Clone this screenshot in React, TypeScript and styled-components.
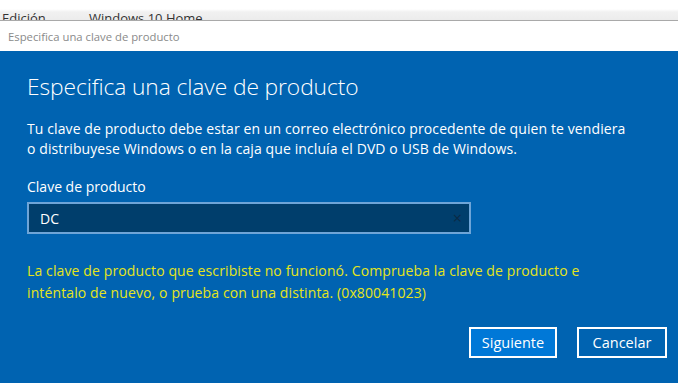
import React from "react";
import styled, { createGlobalStyle } from "styled-components";

const Global = createGlobalStyle`
  html, body { margin: 0; padding: 0; width: 678px; height: 383px; overflow: hidden; }
  body { font-family: "Open Sans", "Noto Sans", sans-serif; background: #0063b1; }
`;

const Page = styled.div`
  width: 678px;
  height: 383px;
  display: flex;
  flex-direction: column;
  overflow: hidden;
`;

const BackStrip = styled.div`
  height: 20px;
  background: linear-gradient(#ffffff 0%, #ffffff 45%, #f1f1f1 60%, #ececec 100%);
  border-bottom: 1px solid #a9a9a9;
  display: flex;
  align-items: flex-start;
  overflow: hidden;
  font-size: 13px;
  color: #333;
  padding-left: 2px;
  box-sizing: content-box;
`;

const BackCell = styled.span<{ $w?: number }>`
  display: inline-block;
  width: ${(p) => p.$w ?? 0}px;
  line-height: 1;
  margin-top: 12px;
  white-space: nowrap;
`;

const TitleBar = styled.div`
  height: 30px;
  background: #ffffff;
  display: flex;
  align-items: center;
  padding-left: 8px;
  font-size: 11.3px;
  color: #8a8a8a;
`;

const Dialog = styled.div`
  flex: 1;
  background: #0063b1;
  padding: 21px 0 0 27px;
  display: flex;
  flex-direction: column;
  color: #ffffff;
`;

const Heading = styled.h1`
  margin: 0;
  font-size: 22.8px;
  font-weight: 300;
  line-height: 30px;
  letter-spacing: -0.1px;
`;

const Body = styled.p`
  margin: 17px 0 0;
  font-size: 14px;
  line-height: 20px;
  letter-spacing: 0.1px;
`;

const Label = styled.div`
  margin-top: 18px;
  font-size: 14px;
  line-height: 20px;
`;

const InputBox = styled.div`
  margin-top: 5px;
  width: 444px;
  height: 32px;
  box-sizing: border-box;
  border: 2px solid #6ea5d8;
  background: #003e6c;
  display: flex;
  align-items: center;
  padding: 0 7px 0 11px;
  font-size: 14px;
`;

const InputText = styled.span`
  flex: 1;
  color: #ffffff;
`;

const Clear = styled.span`
  color: #0b2a45;
  font-size: 16px;
  line-height: 1;
`;

const ErrorText = styled.p`
  margin: 26px 0 0;
  font-size: 14px;
  line-height: 22px;
  color: #e5e51a;
  letter-spacing: 0.12px;
`;

const Buttons = styled.div`
  margin-top: 23px;
  display: flex;
  justify-content: flex-end;
  gap: 20px;
  padding-right: 11px;
`;

const Button = styled.button<{ $primary?: boolean }>`
  width: ${(p) => (p.$primary ? 88 : 90)}px;
  height: 31px;
  box-sizing: border-box;
  border: 2px solid #ffffff;
  background: ${(p) => (p.$primary ? "#0078d7" : "#0063b1")};
  color: #ffffff;
  font-family: "Open Sans", "Noto Sans", sans-serif;
  font-size: 14.5px;
  padding: 0;
  display: flex;
  align-items: center;
  justify-content: center;
`;

export default function App() {
  return (
    <Page>
      <Global />
      <BackStrip>
        <BackCell $w={87}>Edición</BackCell>
        <BackCell>Windows 10 Home</BackCell>
      </BackStrip>
      <TitleBar>Especifica una clave de producto</TitleBar>
      <Dialog>
        <Heading>Especifica una clave de producto</Heading>
        <Body>
          Tu clave de producto debe estar en un correo electrónico procedente de quien te vendiera
          <br />o distribuyese Windows o en la caja que incluía el DVD o USB de Windows.
        </Body>
        <Label>Clave de producto</Label>
        <InputBox>
          <InputText>DC</InputText>
          <Clear>×</Clear>
        </InputBox>
        <ErrorText>
          La clave de producto que escribiste no funcionó. Comprueba la clave de producto e
          <br />inténtalo de nuevo, o prueba con una distinta. (0x80041023)
        </ErrorText>
        <Buttons>
          <Button $primary>Siguiente</Button>
          <Button>Cancelar</Button>
        </Buttons>
      </Dialog>
    </Page>
  );
}
